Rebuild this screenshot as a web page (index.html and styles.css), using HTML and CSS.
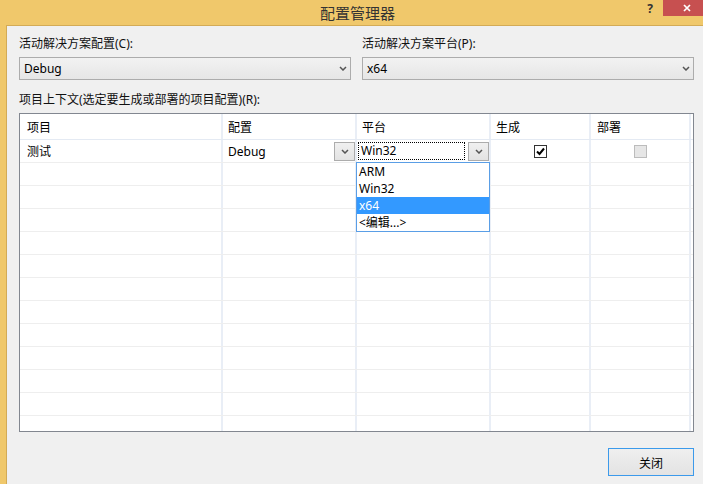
FILE: index.html
```html
<!DOCTYPE html>
<html lang="zh">
<head>
<meta charset="utf-8">
<title>配置管理器</title>
<link rel="stylesheet" href="styles.css">
</head>
<body>
<div class="window">
  <div class="titlebar">
    <span class="title">配置管理器</span>
    <span class="help">?</span>
    <span class="close"><svg width="8" height="8" viewBox="0 0 8 8"><path d="M1 1L7 7M7 1L1 7" stroke="#fff" stroke-width="1.7" fill="none"/></svg></span>
  </div>
  <div class="client">
    <div class="top">
      <div class="field">
        <div class="label">活动解决方案配置(C):</div>
        <div class="combo"><span>Debug</span><svg class="chev" width="8" height="5" viewBox="0 0 8 5"><path d="M1 1l3 3 3-3" fill="none" stroke="#555" stroke-width="1.5"/></svg></div>
      </div>
      <div class="field">
        <div class="label">活动解决方案平台(P):</div>
        <div class="combo"><span>x64</span><svg class="chev" width="8" height="5" viewBox="0 0 8 5"><path d="M1 1l3 3 3-3" fill="none" stroke="#555" stroke-width="1.5"/></svg></div>
      </div>
    </div>
    <div class="label label2">项目上下文(选定要生成或部署的项目配置)(R):</div>
    <div class="grid">
      <div class="row head">
        <div class="cell first">项目</div>
        <div class="cell">配置</div>
        <div class="cell">平台</div>
        <div class="cell">生成</div>
        <div class="cell deploy">部署</div>
        <div class="cell last"></div>
      </div>
      <div class="row">
        <div class="cell first">测试</div>
        <div class="cell cfg"><span class="grow">Debug</span><span class="dbtn"><svg width="8" height="5" viewBox="0 0 8 5"><path d="M1 1l3 3 3-3" fill="none" stroke="#555" stroke-width="1.5"/></svg></span></div>
        <div class="cell plat"><span class="focus">Win32</span><span class="dbtn"><svg width="8" height="5" viewBox="0 0 8 5"><path d="M1 1l3 3 3-3" fill="none" stroke="#555" stroke-width="1.5"/></svg></span></div>
        <div class="cell center"><span class="check"><svg width="11" height="11" viewBox="0 0 11 11"><path d="M2 5.5L4.5 8L9 2.5" fill="none" stroke="#000" stroke-width="2"/></svg></span></div>
        <div class="cell center"><span class="check disabled"></span></div>
        <div class="cell last"></div>
      </div>
      <div class="row"><div class="cell first"></div><div class="cell"></div><div class="cell"></div><div class="cell"></div><div class="cell"></div><div class="cell last"></div></div>
      <div class="row"><div class="cell first"></div><div class="cell"></div><div class="cell"></div><div class="cell"></div><div class="cell"></div><div class="cell last"></div></div>
      <div class="row"><div class="cell first"></div><div class="cell"></div><div class="cell"></div><div class="cell"></div><div class="cell"></div><div class="cell last"></div></div>
      <div class="row"><div class="cell first"></div><div class="cell"></div><div class="cell"></div><div class="cell"></div><div class="cell"></div><div class="cell last"></div></div>
      <div class="row"><div class="cell first"></div><div class="cell"></div><div class="cell"></div><div class="cell"></div><div class="cell"></div><div class="cell last"></div></div>
      <div class="row"><div class="cell first"></div><div class="cell"></div><div class="cell"></div><div class="cell"></div><div class="cell"></div><div class="cell last"></div></div>
      <div class="row"><div class="cell first"></div><div class="cell"></div><div class="cell"></div><div class="cell"></div><div class="cell"></div><div class="cell last"></div></div>
      <div class="row"><div class="cell first"></div><div class="cell"></div><div class="cell"></div><div class="cell"></div><div class="cell"></div><div class="cell last"></div></div>
      <div class="row"><div class="cell first"></div><div class="cell"></div><div class="cell"></div><div class="cell"></div><div class="cell"></div><div class="cell last"></div></div>
      <div class="row"><div class="cell first"></div><div class="cell"></div><div class="cell"></div><div class="cell"></div><div class="cell"></div><div class="cell last"></div></div>
      <div class="row"><div class="cell first"></div><div class="cell"></div><div class="cell"></div><div class="cell"></div><div class="cell"></div><div class="cell last"></div></div>
      <div class="row"><div class="cell first"></div><div class="cell"></div><div class="cell"></div><div class="cell"></div><div class="cell"></div><div class="cell last"></div></div>
      <div class="dropdown">
        <div class="item">ARM</div>
        <div class="item">Win32</div>
        <div class="item selected">x64</div>
        <div class="item">&lt;编辑...&gt;</div>
      </div>
    </div>
    <div class="footer">
      <button class="btn">关闭</button>
    </div>
  </div>
</div>
</body>
</html>
```

FILE: styles.css
```css
html, body {
  margin: 0;
  padding: 0;
}
body {
  width: 703px;
  height: 484px;
  overflow: hidden;
  background: #f0c86b;
  font-family: "Noto Sans", "Noto Sans CJK SC", sans-serif;
  font-size: 12px;
  color: #000;
}
.window {
  display: flex;
  flex-direction: column;
  width: 703px;
  height: 484px;
}
.titlebar {
  height: 25px;
  display: flex;
  align-items: flex-start;
}
.title {
  margin-left: 320px;
  font-family: "Noto Sans CJK SC", sans-serif;
  font-size: 15px;
  line-height: 25px;
  color: #333;
}
.help {
  margin-left: auto;
  margin-right: 10px;
  font-weight: bold;
  font-size: 12px;
  line-height: 17px;
  color: #333;
}
.close {
  width: 40px;
  height: 16px;
  background: #c75050;
  display: flex;
  align-items: center;
  padding-left: 20px;
  box-sizing: border-box;
}
.client {
  flex: 1;
  margin-left: 6px;
  border-top: 1px solid #d3ab56;
  border-left: 1px solid #d3ab56;
  background: #f0f0f0;
  padding: 10px 9px 0 12px;
}
.top {
  display: grid;
  grid-template-columns: 332px 332px;
  column-gap: 11px;
}
.label {
  line-height: 16px;
  margin-bottom: 5px;
  color: #111;
}
.label2 {
  margin-top: 12px;
}
.combo {
  height: 23px;
  box-sizing: border-box;
  border: 1px solid #acacac;
  background: linear-gradient(#f2f2f2, #e6e6e6);
  display: flex;
  align-items: center;
  justify-content: space-between;
  padding: 0 3px 0 4px;
}
.grid {
  position: relative;
  height: 319px;
  box-sizing: border-box;
  border: 1px solid #828790;
  background: #fff;
  overflow: hidden;
}
.row {
  display: grid;
  grid-template-columns: 203px 134px 134px 100px 100px 1fr;
  height: 23px;
  box-sizing: border-box;
  border-bottom: 1px solid #eeeeee;
}
.row.head {
  height: 26px;
  border-bottom: 1px solid #e4eaf3;
}
.cell {
  border-right: 2px solid #e9eef6;
  padding-left: 5px;
  display: flex;
  align-items: center;
  min-width: 0;
}
.cell.first {
  padding-left: 7px;
}
.cell.deploy {
  padding-left: 6px;
}
.cell.last {
  border-right: none;
  padding: 0;
}
.cell.center {
  justify-content: center;
  padding-left: 0;
}
.grow {
  flex: 1;
}
.cell.cfg {
  padding-right: 0;
}
.cell.plat {
  padding-left: 1px;
}
.dbtn {
  width: 21px;
  height: 19px;
  box-sizing: border-box;
  border: 1px solid #acacac;
  background: linear-gradient(#f0f0f0, #e3e3e3);
  display: flex;
  align-items: center;
  justify-content: center;
}
.focus {
  width: 107px;
  height: 18px;
  box-sizing: border-box;
  border: 1px dotted #000;
  padding-left: 2px;
  line-height: 16px;
  margin-right: 3px;
}
.check {
  width: 13px;
  height: 13px;
  box-sizing: border-box;
  border: 1px solid #333;
  background: #fff;
  display: flex;
  align-items: center;
  justify-content: center;
}
.check.disabled {
  border-color: #bcbcbc;
  background: #e6e6e6;
}
.dropdown {
  position: absolute;
  left: 336px;
  top: 48px;
  width: 134px;
  box-sizing: border-box;
  border: 1px solid #5a9ee6;
  background: #fff;
}
.item {
  height: 17px;
  line-height: 17px;
  padding-left: 2px;
}
.item.selected {
  background: #3399ff;
  color: #fff;
}
.footer {
  display: flex;
  justify-content: flex-end;
  margin-top: 16px;
}
.btn {
  width: 86px;
  height: 28px;
  box-sizing: border-box;
  border: 1px solid #3c9aeb;
  background: linear-gradient(#efefef, #e3e3e3);
  font-family: "Noto Sans CJK SC", sans-serif;
  font-size: 12px;
  color: #000;
  padding: 0;
}
```
